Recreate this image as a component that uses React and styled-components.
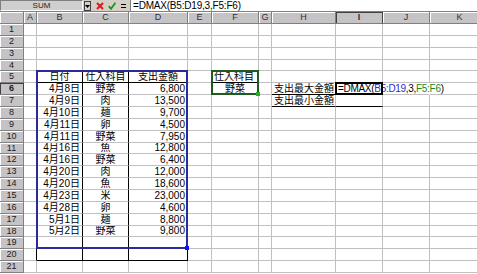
import React from 'react';
import styled, { createGlobalStyle } from 'styled-components';

const Global = createGlobalStyle`
  html, body { margin: 0; padding: 0; background: #fff; }
  body {
    width: 477px; height: 274px; overflow: hidden;
    font-family: "Liberation Sans", "Noto Sans CJK JP", sans-serif;
  }
`;

const COLS = [24, 13, 46, 46, 59, 24, 47, 13, 64, 47, 47, 60];
const LETTERS = ['', 'A', 'B', 'C', 'D', 'E', 'F', 'G', 'H', 'I', 'J', 'K'];
const ROWH = [12, 12, 12, 11, 12, 12, 12, 12, 12, 12, 11, 12, 12, 12, 12, 12, 12, 11, 12, 12, 12];
const HEAD_H = 12;

const colStart = (c) => COLS.slice(0, c).reduce((a, b) => a + b, 0);
const rowStart = (r) => HEAD_H + ROWH.slice(0, r - 1).reduce((a, b) => a + b, 0);

const rows = [
  ['4月8日', '野菜', '6,800'],
  ['4月9日', '肉', '13,500'],
  ['4月10日', '麺', '9,700'],
  ['4月11日', '卵', '4,500'],
  ['4月11日', '野菜', '7,950'],
  ['4月16日', '魚', '12,800'],
  ['4月16日', '野菜', '6,400'],
  ['4月20日', '肉', '12,000'],
  ['4月20日', '魚', '18,600'],
  ['4月23日', '米', '23,000'],
  ['4月28日', '卵', '4,600'],
  ['5月1日', '麺', '8,800'],
  ['5月2日', '野菜', '9,800'],
];

/* ---------- formula bar ---------- */
const Bar = styled.div`
  display: flex;
  align-items: stretch;
  height: 12px;
  background: #d4d0c8;
  border-bottom: 1px solid #808080;
  box-sizing: border-box;
`;
const NameBox = styled.div`
  width: 83px;
  box-sizing: border-box;
  background: #cfcfcf;
  border: 1px solid;
  border-color: #808080 #ffffff #ffffff #808080;
  font-size: 8px;
  line-height: 9px;
  text-align: center;
  color: #222;
`;
const DropBtn = styled.div`
  width: 7px;
  margin: 1px 0 0 1px;
  box-sizing: border-box;
  border: 1px solid #404040;
  background: #d4d0c8;
  display: flex;
  align-items: center;
  justify-content: center;
`;
const IconSlot = styled.div`
  width: ${(p) => p.$w}px;
  margin-left: ${(p) => p.$ml}px;
  display: flex;
  align-items: center;
  justify-content: center;
`;
const FormulaInput = styled.div`
  flex: 1;
  margin-left: 4px;
  background: #fff;
  border-left: 1px solid #808080;
  padding-left: 2px;
  font-size: 10px;
  line-height: 11px;
  color: #000;
  white-space: nowrap;
  letter-spacing: -0.2px;
`;

/* ---------- sheet ---------- */
const Sheet = styled.div`
  position: relative;
  display: grid;
  grid-template-columns: ${COLS.map((c) => c + 'px').join(' ')};
  grid-template-rows: ${[HEAD_H, ...ROWH].map((h) => h + 'px').join(' ')};
`;
const Corner = styled.div`
  background: #c6c3c6;
  border-right: 1px solid #808080;
  border-bottom: 1px solid #808080;
  box-shadow: inset 1px 1px #fff;
`;
const ColHead = styled.div`
  background: #c6c3c6;
  border-right: 1px solid ${(p) => (p.$active ? '#404040' : '#808080')};
  border-bottom: 1px solid #808080;
  box-shadow: ${(p) => (p.$active ? 'inset 1px 1px #404040' : 'inset 1px 1px #fff')};
  font-family: "Liberation Sans", sans-serif;
  font-size: 9px;
  font-weight: ${(p) => (p.$active ? 'bold' : 'normal')};
  line-height: 11px;
  text-align: center;
  color: #303030;
`;
const RowHead = styled(ColHead)`
  font-size: 9px;
  line-height: ${(p) => p.$h - 1}px;
  color: #202020;
`;
const Cell = styled.div`
  position: relative;
  box-sizing: border-box;
  border-right: 1px solid ${(p) => (p.$dr ? '#000' : p.$nr ? 'transparent' : '#c0c0c0')};
  border-bottom: 1px solid ${(p) => (p.$db ? '#000' : '#c0c0c0')};
  font-size: 10px;
  line-height: ${(p) => p.$h - 1}px;
  text-align: ${(p) => p.$align || 'left'};
  padding: 0 2px;
  white-space: nowrap;
  overflow: ${(p) => (p.$spill ? 'visible' : 'hidden')};
  z-index: ${(p) => (p.$spill ? 2 : 0)};
  color: #000;
`;
const Ref = styled.span`
  color: ${(p) => p.$c};
`;
const SpillText = styled.span`
  letter-spacing: -0.3px;
`;

/* overlays: range finder boxes & active cell */
const Frame = styled.div`
  position: absolute;
  box-sizing: border-box;
  border: 2px solid ${(p) => p.$color};
  pointer-events: none;
  z-index: 3;
`;
const Handle = styled.div`
  position: absolute;
  width: 4px;
  height: 4px;
  right: -3px;
  bottom: -3px;
  background: ${(p) => p.$color};
`;

const darkRight = new Set();
const darkBottom = new Set();
for (let r = 5; r <= 20; r++) [1, 2, 3, 4].forEach((c) => darkRight.add(`${r}-${c}`));
[5, 6].forEach((r) => [5, 6].forEach((c) => darkRight.add(`${r}-${c}`)));
[2, 3, 4].forEach((c) => {
  [4, 5, 19, 20].forEach((r) => darkBottom.add(`${r}-${c}`));
});
[4, 5, 6].forEach((r) => darkBottom.add(`${r}-6`));
darkBottom.add('6-8');
darkBottom.add('7-8');
darkBottom.add('7-9');

function cellContent(r, c) {
  if (r === 5) {
    if (c === 2) return { t: '日付', a: 'center' };
    if (c === 3) return { t: '仕入科目', a: 'center' };
    if (c === 4) return { t: '支出金額', a: 'center' };
    if (c === 6) return { t: '仕入科目', a: 'left' };
  }
  if (r >= 6 && r <= 18) {
    const d = rows[r - 6];
    if (c === 2) return { t: d[0], a: 'right' };
    if (c === 3) return { t: d[1], a: 'center' };
    if (c === 4) return { t: d[2], a: 'right' };
  }
  if (r === 6 && c === 6) return { t: '野菜', a: 'center' };
  if (r === 6 && c === 8) return { t: '支出最大金額', a: 'left' };
  if (r === 7 && c === 8) return { t: '支出最小金額', a: 'left' };
  return null;
}

const Formula = () => (
  <SpillText>
    =DMAX(<Ref $c="#2b2bd0">B5:D19</Ref>,3,<Ref $c="#1a8a1a">F5:F6</Ref>)
  </SpillText>
);

export default function App() {
  const cells = [];
  cells.push(<Corner key="corner" />);
  for (let c = 1; c < COLS.length; c++) {
    cells.push(
      <ColHead key={`h${c}`} $active={c === 9}>
        {LETTERS[c]}
      </ColHead>
    );
  }
  for (let r = 1; r <= 21; r++) {
    const h = ROWH[r - 1];
    cells.push(
      <RowHead key={`r${r}`} $h={h} $active={r === 6}>
        {r}
      </RowHead>
    );
    for (let c = 1; c < COLS.length; c++) {
      const k = `${r}-${c}`;
      const content = cellContent(r, c);
      const isFormula = r === 6 && c === 9;
      cells.push(
        <Cell
          key={k}
          $h={h}
          $dr={darkRight.has(k)}
          $db={darkBottom.has(k)}
          $nr={r === 6 && (c === 9 || c === 10)}
          $align={content ? content.a : 'left'}
          $spill={isFormula}
        >
          {isFormula ? <Formula /> : content ? content.t : null}
        </Cell>
      );
    }
  }

  const box = (c1, r1, c2, r2) => ({
    left: colStart(c1) - 1,
    top: rowStart(r1) - 1,
    width: colStart(c2 + 1) - colStart(c1) + 1,
    height: rowStart(r2 + 1) - rowStart(r1) + 1,
  });

  return (
    <>
      <Global />
      <Bar>
        <NameBox>SUM</NameBox>
        <DropBtn>
          <svg width="5" height="3" viewBox="0 0 5 3">
            <path d="M0 0h5L2.5 3z" fill="#000" />
          </svg>
        </DropBtn>
        <IconSlot $w={9} $ml={4}>
          <svg width="8" height="8" viewBox="0 0 8 8">
            <path d="M1 1L7 7M7 1L1 7" stroke="#e01818" strokeWidth="2" />
          </svg>
        </IconSlot>
        <IconSlot $w={9} $ml={3}>
          <svg width="8" height="8" viewBox="0 0 8 8">
            <path d="M0.8 4.2L3 6.8L7.4 0.8" stroke="#149a14" strokeWidth="1.8" fill="none" />
          </svg>
        </IconSlot>
        <IconSlot $w={6} $ml={4}>
          <svg width="5" height="4" viewBox="0 0 5 4">
            <path d="M0 0.5h5M0 3.5h5" stroke="#000" strokeWidth="1" />
          </svg>
        </IconSlot>
        <FormulaInput>=DMAX(B5:D19,3,F5:F6)</FormulaInput>
      </Bar>
      <Sheet>
        {cells}
        <Frame $color="#2a2a9a" style={box(2, 5, 4, 19)}>
          <Handle $color="#1010ff" />
        </Frame>
        <Frame $color="#1f5a1f" style={box(6, 5, 6, 6)}>
          <Handle $color="#20b020" />
        </Frame>
        <Frame $color="#000" style={box(9, 6, 9, 6)} />
      </Sheet>
    </>
  );
}
